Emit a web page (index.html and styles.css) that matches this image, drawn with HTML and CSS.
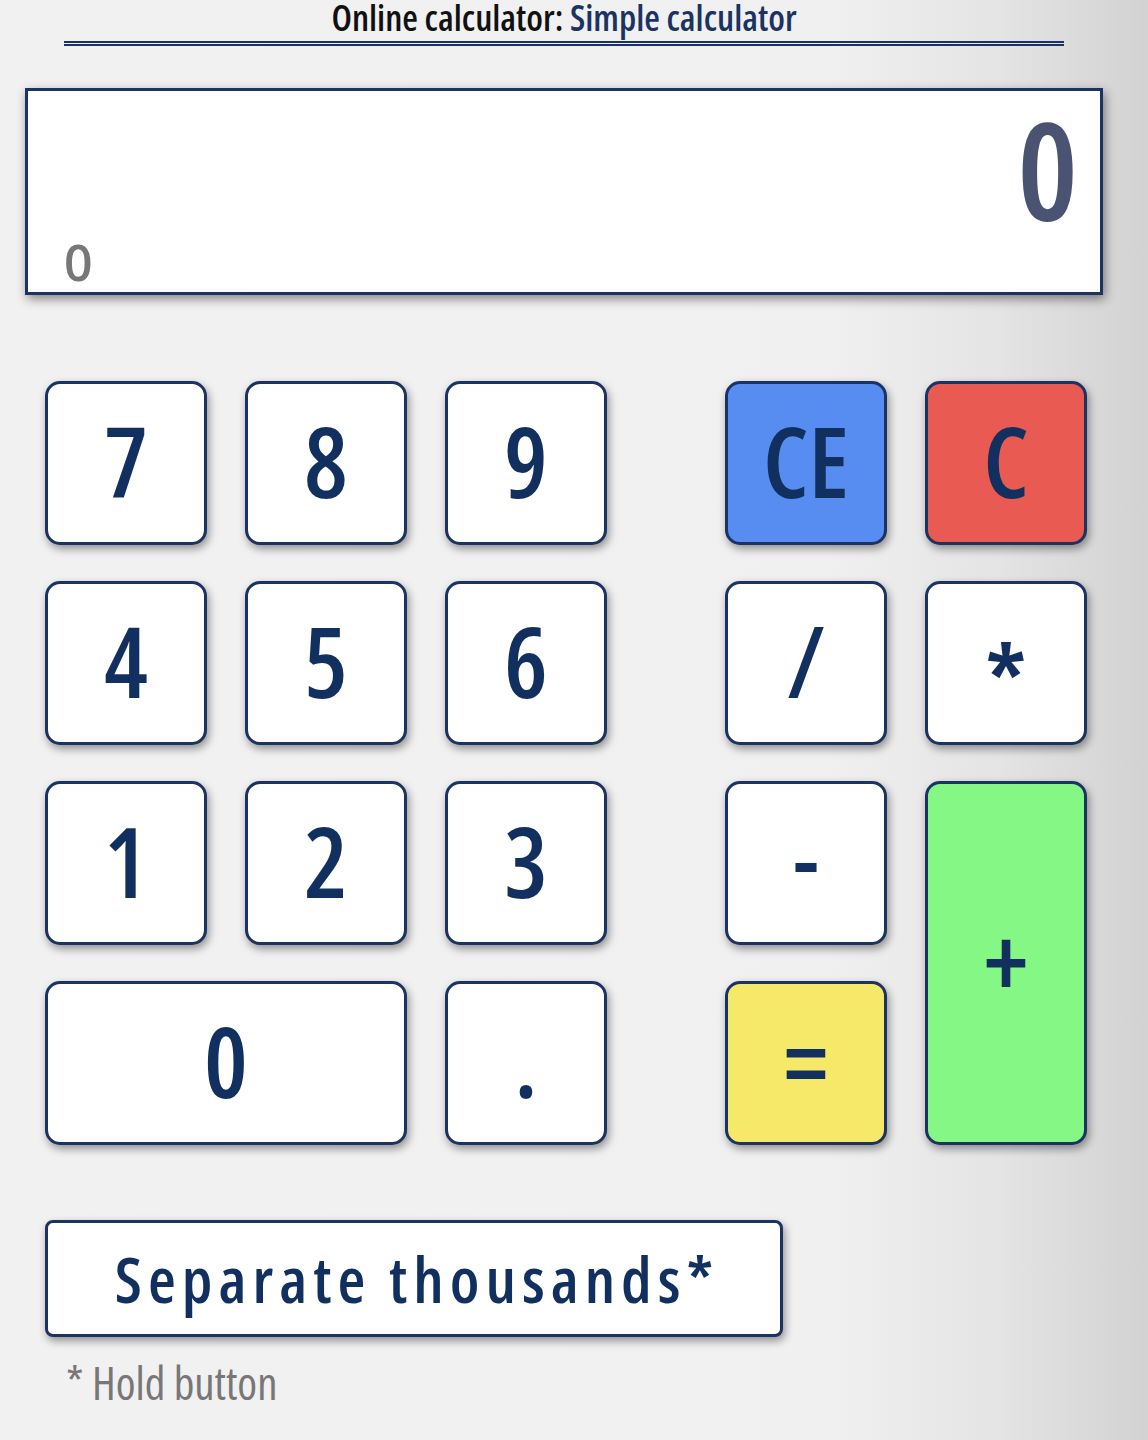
FILE: index.html
```html
<!DOCTYPE html>
<html lang="en">
<head>
<meta charset="utf-8">
<title>Online calculator: Simple calculator</title>
<link rel="stylesheet" href="styles.css">
</head>
<body>
<div class="page">
  <h1 class="title"><span class="title-a">Online calculator:</span> <span class="title-b">Simple calculator</span></h1>
  <div class="display">
    <div class="display-main">0</div>
    <div class="display-sub">0</div>
  </div>
  <div class="keys">
    <button class="key">7</button>
    <button class="key">8</button>
    <button class="key">9</button>
    <span class="spacer"></span>
    <button class="key key-ce">CE</button>
    <button class="key key-c">C</button>

    <button class="key">4</button>
    <button class="key">5</button>
    <button class="key">6</button>
    <span class="spacer"></span>
    <button class="key">/</button>
    <button class="key key-mul">*</button>

    <button class="key">1</button>
    <button class="key">2</button>
    <button class="key">3</button>
    <span class="spacer"></span>
    <button class="key key-minus">-</button>
    <button class="key key-plus">+</button>

    <button class="key key-zero">0</button>
    <button class="key">.</button>
    <span class="spacer"></span>
    <button class="key key-eq">=</button>
  </div>
  <button class="sep">Separate thousands*</button>
  <p class="note">* Hold button</p>
</div>
</body>
</html>
```
FILE: styles.css
```css
html, body {
  margin: 0;
  padding: 0;
}
body {
  min-height: 1440px;
  background: linear-gradient(to right, #f1f1f1 0%, #f0f0f0 72%, #e4e4e4 87%, #d2d2d2 100%);
  font-family: "Open Sans", "Roboto Condensed", sans-serif;
  font-stretch: 75%;
  overflow: hidden;
}
.page {
  width: 1078px;
  padding-left: 25px;
}
.title {
  margin: 0 39px;
  padding-bottom: 5px;
  border-bottom: 5px double #1a3363;
  font-size: 36px;
  line-height: 36px;
  font-weight: 600;
  font-stretch: 75%;
  text-align: center;
}
.title-a { color: #111; }
.title-b { color: #1a3363; }
.display {
  margin-top: 42px;
  height: 201px;
  background: #fff;
  border: 3px solid #1a3363;
  box-shadow: 2px 4px 10px rgba(0,0,0,0.45);
  display: flex;
  flex-direction: column;
  justify-content: space-between;
}
.display-main {
  text-align: right;
  font-size: 136px;
  font-weight: 600;
  font-stretch: 87.5%;
  line-height: 1;
  color: #4b5373;
  padding: 10px 22px 0 0;
}
.display-sub {
  font-size: 50px;
  font-weight: 600;
  font-stretch: 90%;
  line-height: 1;
  color: #777;
  padding: 0 0 6px 36px;
}
.keys {
  margin: 86px 0 0 20px;
  display: grid;
  grid-template-columns: 162px 162px 162px 42px 162px 162px;
  grid-auto-rows: 164px;
  column-gap: 38px;
  row-gap: 36px;
}
.key {
  font-family: inherit;
  font-stretch: 87.5%;
  font-weight: 600;
  border: 3px solid #1a3363;
  border-radius: 15px;
  background: #fff;
  color: #12305f;
  font-size: 98px;
  line-height: 1;
  padding: 0 0 6px 0;
  box-shadow: 2px 4px 9px rgba(0,0,0,0.4);
}
.key-ce { background: #578cf1; font-stretch: 80%; }
.key-c { background: #e85a52; font-stretch: 80%; }
.key-eq { background: #f6e96a; font-size: 100px; }
.key-plus { background: #84f784; grid-row: span 2; font-size: 100px; }
.key-minus { font-size: 90px; padding: 0 0 12px 0; }
.key-mul { font-size: 100px; padding: 32px 0 0 0; }
.key-zero { grid-column: span 2; }
.sep {
  display: block;
  margin: 75px 0 0 20px;
  width: 738px;
  height: 117px;
  font-family: inherit;
  font-stretch: 80%;
  font-weight: 600;
  background: #fff;
  border: 3px solid #1a3363;
  border-radius: 8px;
  box-shadow: 2px 4px 9px rgba(0,0,0,0.4);
  color: #12305f;
  font-size: 64px;
  line-height: 1;
  letter-spacing: 6px;
  padding: 0 0 0 6px;
}
.note {
  margin: 23px 0 0 41px;
  font-size: 45px;
  font-weight: 500;
  font-stretch: 80%;
  line-height: 1;
  color: #777;
}
```
